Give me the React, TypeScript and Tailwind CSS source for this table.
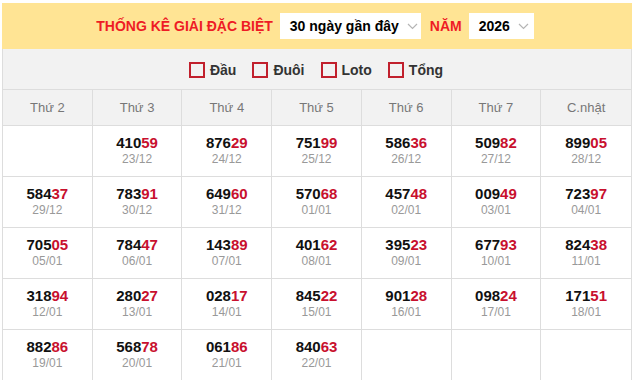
import React from 'react';

const DAYS = ['Thứ 2', 'Thứ 3', 'Thứ 4', 'Thứ 5', 'Thứ 6', 'Thứ 7', 'C.nhật'];

const ROWS: ([string, string] | null)[][] = [
  [null, ['41059', '23/12'], ['87629', '24/12'], ['75199', '25/12'], ['58636', '26/12'], ['50982', '27/12'], ['89905', '28/12']],
  [['58437', '29/12'], ['78391', '30/12'], ['64960', '31/12'], ['57068', '01/01'], ['45748', '02/01'], ['00949', '03/01'], ['72397', '04/01']],
  [['70505', '05/01'], ['78447', '06/01'], ['14389', '07/01'], ['40162', '08/01'], ['39523', '09/01'], ['67793', '10/01'], ['82438', '11/01']],
  [['31894', '12/01'], ['28027', '13/01'], ['02817', '14/01'], ['84522', '15/01'], ['90128', '16/01'], ['09824', '17/01'], ['17151', '18/01']],
  [['88286', '19/01'], ['56878', '20/01'], ['06186', '21/01'], ['84063', '22/01'], null, null, null],
];

const FILTERS = ['Đầu', 'Đuôi', 'Loto', 'Tổng'];

function Chevron() {
  return (
    <svg width="11" height="7" viewBox="0 0 11 7" fill="none" stroke="#b5b5b5" strokeWidth="1.2" className="ml-[8px]">
      <path d="M1 1l4.5 4.5L10 1" />
    </svg>
  );
}

function SelectBox({ label, width }: { label: string; width: string }) {
  return (
    <div className={`${width} h-[26px] bg-white flex items-center pl-[10px] text-[14px] font-bold text-black`}>
      <span>{label}</span>
      <Chevron />
    </div>
  );
}

export default function App() {
  return (
    <div className="ml-[2px] mt-[3px] w-[630px] font-['Liberation_Sans',Arial,sans-serif]">
      {/* Title bar */}
      <div className="h-[46px] bg-[#ffe494] flex items-center justify-center pr-[4px]">
        <span className="text-[14px] font-bold text-[#ee1c25] mr-[7px]">THỐNG KÊ GIẢI ĐẶC BIỆT</span>
        <SelectBox label="30 ngày gần đây" width="w-[141px]" />
        <span className="text-[14px] font-bold text-[#ee1c25] ml-[9px] mr-[7px]">NĂM</span>
        <SelectBox label="2026" width="w-[65px]" />
      </div>

      <div className="border-l border-r border-[#dddddd]">
        {/* Filters */}
        <div className="h-[41px] bg-[#f2f2f2] border-b border-[#dddddd] flex items-center justify-center gap-[16px] pr-[2px] pt-[2px]">
          {FILTERS.map((f) => (
            <label key={f} className="flex items-center gap-[5px]">
              <span className="w-[16px] h-[16px] border-2 border-[#c1202d] bg-[#f2f2f2]"></span>
              <span className="text-[14px] font-bold text-[#333333]">{f}</span>
            </label>
          ))}
        </div>

        {/* Day header */}
        <div className="grid grid-cols-7 bg-[#f2f2f2]">
          {DAYS.map((d, i) => (
            <div
              key={d}
              className={`h-[36px] flex items-center justify-center text-[13px] text-[#777777] border-b border-[#dddddd] ${i < 6 ? 'border-r' : ''}`}
            >
              {d}
            </div>
          ))}
        </div>

        {/* Results */}
        {ROWS.map((row, r) => (
          <div key={r} className="grid grid-cols-7 bg-white">
            {row.map((cell, i) => (
              <div
                key={i}
                className={`h-[51px] flex flex-col items-center justify-center border-b border-[#dddddd] ${i < 6 ? 'border-r' : ''}`}
              >
                {cell && (
                  <>
                    <div className="text-[15px] leading-[16px] font-bold text-[#111111]">
                      {cell[0].slice(0, 3)}
                      <span className="text-[#c8102e]">{cell[0].slice(3)}</span>
                    </div>
                    <div className="text-[12px] leading-[16px] text-[#999999]">{cell[1]}</div>
                  </>
                )}
              </div>
            ))}
          </div>
        ))}
      </div>
    </div>
  );
}
